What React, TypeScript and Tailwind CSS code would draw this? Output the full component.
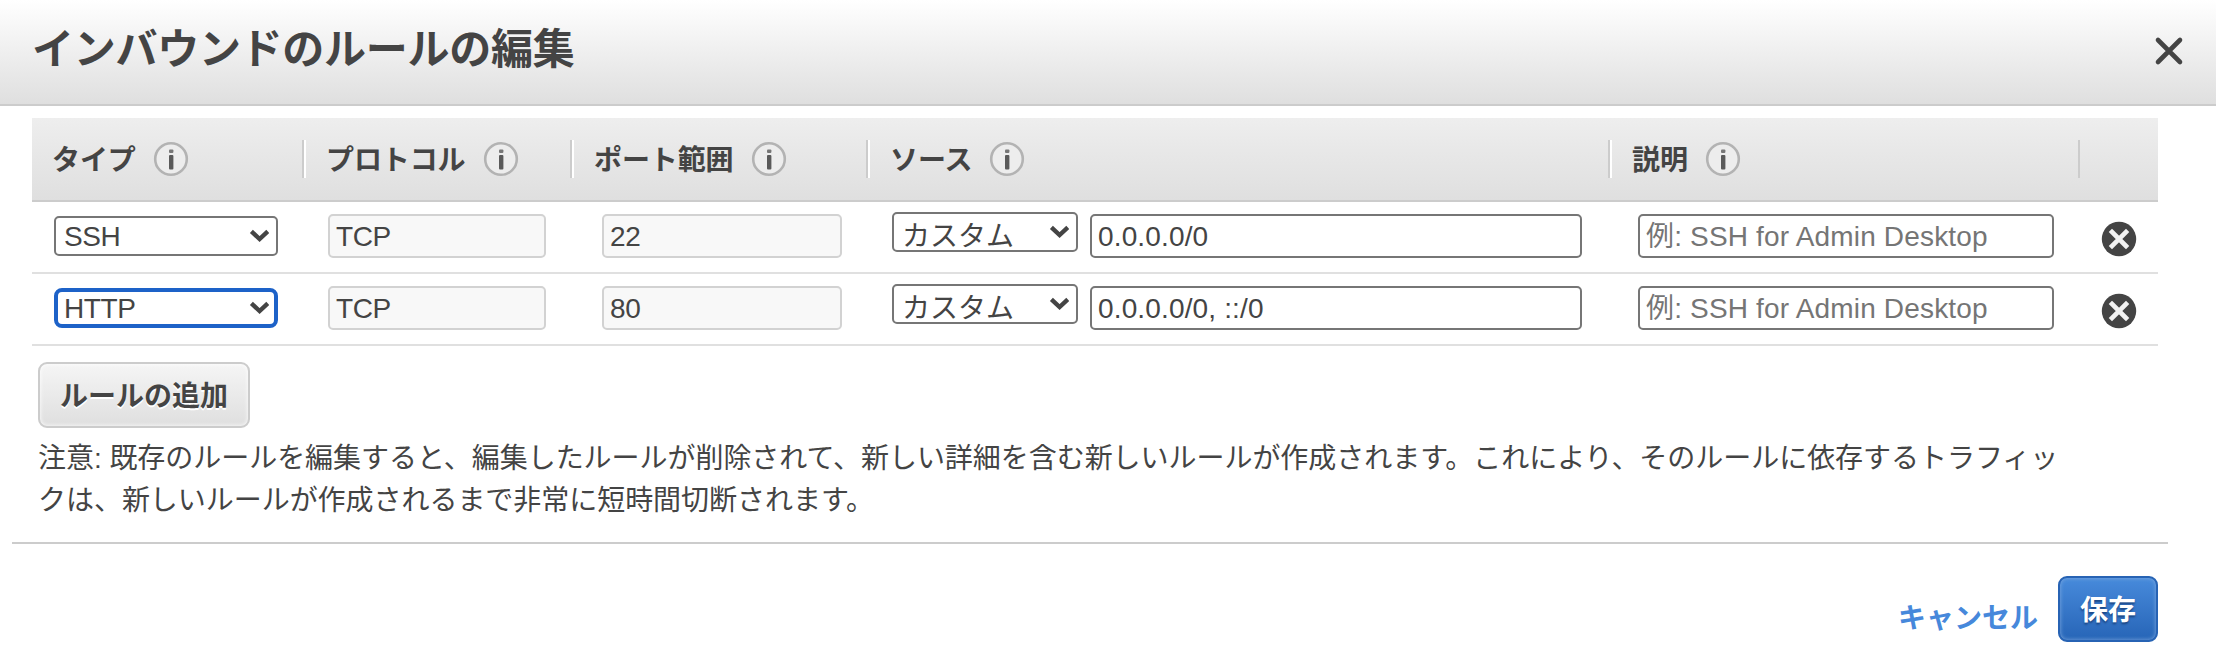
import React, { useState } from 'react';

interface Rule {
  id: number;
  type: string;
  protocol: string;
  port: string;
  source: string;
  cidr: string;
  description: string;
}

const initialRules: Rule[] = [
  { id: 1, type: 'SSH', protocol: 'TCP', port: '22', source: 'カスタム', cidr: '0.0.0.0/0', description: '' },
  { id: 2, type: 'HTTP', protocol: 'TCP', port: '80', source: 'カスタム', cidr: '0.0.0.0/0, ::/0', description: '' },
];

const InfoIcon: React.FC = () => (
  <svg width="36" height="36" viewBox="0 0 36 36" className="shrink-0">
    <circle cx="18" cy="18" r="15.8" fill="#ededed" stroke="#b3b3b3" strokeWidth="2.6" />
    <rect x="16" y="8.5" width="4.4" height="3.6" rx="1" fill="#777" />
    <rect x="16" y="14" width="4.4" height="14.6" rx="1" fill="#5a5a5a" />
  </svg>
);

const Chevron: React.FC = () => (
  <svg width="20" height="14" viewBox="0 0 20 14" className="shrink-0 pointer-events-none">
    <path d="M2.4 2.4 L10.6 10 L18.8 2.4" fill="none" stroke="#444" strokeWidth="4.4" />
  </svg>
);

const DeleteIcon: React.FC = () => (
  <svg width="36" height="36" viewBox="0 0 36 36">
    <circle cx="18" cy="18" r="17.2" fill="#444" />
    <path d="M11 11 L25 25 M25 11 L11 25" stroke="#f2f2f2" strokeWidth="4.6" strokeLinecap="square" />
  </svg>
);

const HeaderCell: React.FC<{ label: string; last?: boolean }> = ({ label, last }) => (
  <div className="flex items-center justify-between">
    <div className="flex items-center gap-[17px] pl-5 font-bold tracking-[-0.1px]">
      <span className="pt-[3px]">{label}</span>
      <InfoIcon />
    </div>
    <div className={`w-1 h-[38px] border-l-2 border-[#ccc] ${last ? '' : 'bg-white'}`} />
  </div>
);

interface SelectProps {
  value: string;
  options: string[];
  focused?: boolean;
  className: string;
  onChange: (value: string) => void;
}

const Select: React.FC<SelectProps> = ({ value, options, focused, className, onChange }) => (
  <div
    className={`flex items-center h-10 bg-white ${
      focused ? 'border-4 border-[#1d62c8] rounded-lg pl-[6px] pr-[5px]' : 'border-2 border-[#767676] rounded-[5px] pl-2 pr-[7px]'
    } ${className}`}
  >
    <select
      value={value}
      onChange={(e) => onChange(e.target.value)}
      className="flex-1 min-w-0 h-full appearance-none bg-transparent outline-none leading-7"
    >
      {options.map((o) => (
        <option key={o}>{o}</option>
      ))}
    </select>
    <Chevron />
  </div>
);

const columns = 'grid grid-cols-[274px_268px_296px_742px_470px_76px]';
const field = 'block h-11 border-2 rounded-[5px] px-[6px] pt-[2px] outline-none';
const editable = 'border-[#767676] bg-white placeholder:text-[#757575] placeholder:opacity-100 placeholder:tracking-[0.17px]';
const readonly = 'border-[#d2d2d2] bg-[#f8f8f8] tracking-[-0.4px]';

const App: React.FC = () => {
  const [rules, setRules] = useState<Rule[]>(initialRules);

  const update = (id: number, patch: Partial<Rule>) => {
    setRules(rules.map((r) => (r.id === id ? { ...r, ...patch } : r)));
  };

  const addRule = () => {
    setRules([...rules, { ...initialRules[0], id: Date.now() }]);
  };

  return (
    <div className="w-[2216px] h-[666px] bg-white overflow-hidden text-[28px] leading-[42px] text-[#444] font-['Liberation_Sans','Noto_Sans_CJK_JP',sans-serif]">
      {/* Title bar */}
      <header className="flex items-center justify-between h-[106px] pl-8 pr-8 border-b-2 border-[#ccc] bg-linear-to-b from-white to-[#dfdfdf]">
        <h1 className="text-[42px] leading-[60px] font-bold pb-1 tracking-[-0.28px]">インバウンドのルールの編集</h1>
        <button type="button" aria-label="閉じる" className="pb-[3px]">
          <svg width="30" height="30" viewBox="0 0 30 30">
            <path d="M4 4 L26 26 M26 4 L4 26" stroke="#444" strokeWidth="4.6" strokeLinecap="round" />
          </svg>
        </button>
      </header>

      {/* Rules table */}
      <div className="mt-3 ml-8 w-[2126px]">
        <div className={`${columns} h-[84px] border-b-2 border-[#ccc] bg-linear-to-b from-[#eee] to-[#dfdfdf]`}>
          <HeaderCell label="タイプ" />
          <HeaderCell label="プロトコル" />
          <HeaderCell label="ポート範囲" />
          <HeaderCell label="ソース" />
          <HeaderCell label="説明" last />
        </div>

        {rules.map((rule) => (
          <div key={rule.id} className={`${columns} h-[72px] border-b-2 border-[#e0e0e0]`}>
            <div className="pt-[14px] pl-[22px]">
              <Select
                value={rule.type}
                options={['SSH', 'HTTP', 'HTTPS']}
                focused={rule.id === 2}
                className="w-[224px] tracking-[-0.4px] [&>select]:pt-px"
                onChange={(type) => update(rule.id, { type })}
              />
            </div>
            <div className="pt-3 pl-[22px]">
              <input readOnly value={rule.protocol} className={`${field} ${readonly} w-[218px]`} />
            </div>
            <div className="pt-3 pl-7">
              <input readOnly value={rule.port} className={`${field} ${readonly} w-[240px]`} />
            </div>
            <div className="flex items-start gap-3 pt-[10px] pl-[22px]">
              <Select
                value={rule.source}
                options={['カスタム', '任意の場所', 'マイ IP']}
                className="w-[186px] [&>select]:pt-[9px]"
                onChange={(source) => update(rule.id, { source })}
              />
              <input
                value={rule.cidr}
                onChange={(e) => update(rule.id, { cidr: e.target.value })}
                className={`${field} ${editable} mt-[2px] w-[492px] tracking-[0.15px]`}
              />
            </div>
            <div className="pt-3 pl-[26px]">
              <input
                value={rule.description}
                placeholder="例: SSH for Admin Desktop"
                onChange={(e) => update(rule.id, { description: e.target.value })}
                className={`${field} ${editable} w-[416px]`}
              />
            </div>
            <div className="pt-[19px] pl-[19px]">
              <button
                type="button"
                aria-label="削除"
                className="block"
                onClick={() => setRules(rules.filter((r) => r.id !== rule.id))}
              >
                <DeleteIcon />
              </button>
            </div>
          </div>
        ))}
      </div>

      <div className="mt-4 ml-[38px]">
        <button
          type="button"
          onClick={addRule}
          className="block w-[212px] h-[66px] pt-[3px] border-2 border-[#ccc] rounded-[9px] bg-linear-to-b from-[#f5f5f5] to-[#dfdfdf] font-bold shadow-[inset_0_0_4px_#fff] [text-shadow:0_2px_0_#fff]"
        >
          ルールの追加
        </button>
        <p className="mt-[10px] whitespace-nowrap tracking-[-0.04px]">
          注意: 既存のルールを編集すると、編集したルールが削除されて、新しい詳細を含む新しいルールが作成されます。これにより、そのルールに依存するトラフィッ
          <br />
          クは、新しいルールが作成されるまで非常に短時間切断されます。
        </p>
      </div>

      {/* Footer */}
      <footer className="mt-5 ml-3 w-[2156px] flex justify-end items-start gap-5 border-t-2 border-[#ccc] pt-8 pr-[10px]">
        <button type="button" className="mt-[22px] font-bold text-[#4688db]">
          キャンセル
        </button>
        <button
          type="button"
          className="w-[100px] h-[66px] pt-[3px] border-2 border-[#2763b4] rounded-[9px] bg-linear-to-b from-[#478adb] to-[#2765b7] font-bold text-white shadow-[inset_0_0_4px_#7fabe0] [text-shadow:0_2px_2px_#1b4785]"
        >
          保存
        </button>
      </footer>
    </div>
  );
};

export default App;
